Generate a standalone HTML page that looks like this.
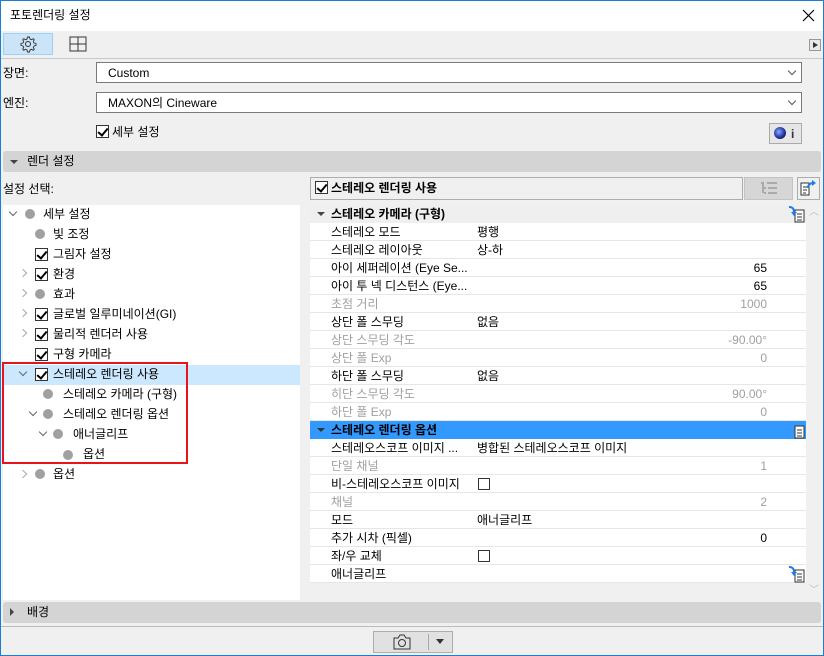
<!DOCTYPE html>
<html><head><meta charset="utf-8"><style>
*{margin:0;padding:0;box-sizing:border-box}
body{width:824px;height:656px;overflow:hidden;background:#f0f0f0;font-family:"Liberation Sans","Noto Sans CJK KR",sans-serif;font-size:12px;color:#000;position:relative}
.a{position:absolute}
.t{position:absolute;white-space:nowrap;line-height:14px}
.cb{position:absolute;width:13px;height:13px;border:1px solid #333;background:#fff}
.cb.c::after{content:"";position:absolute;left:3px;top:0px;width:4px;height:8px;border:solid #000;border-width:0 2px 2px 0;transform:rotate(40deg)}
.bul{position:absolute;width:10px;height:10px;border-radius:50%;background:#a0a0a0}
.chev{position:absolute;width:6px;height:6px;border:solid #666;border-width:0 1.5px 1.5px 0}
.dn{transform:rotate(45deg)}
.rt{transform:rotate(-45deg);border-color:#aaa}
.row{position:absolute;left:310px;width:496px;height:18px;background:#fff;border-bottom:1px solid #e6e6e6;line-height:14px}
.row .l{position:absolute;left:21px;top:2px}
.row .v{position:absolute;left:167px;top:2px}
.row .n{position:absolute;right:39px;top:2px}
.g{color:#a0a0a0}
.hd{position:absolute;left:310px;width:496px;height:18px;background:#efefef;font-weight:bold}
.dd{position:absolute;left:96px;width:706px;height:21px;background:#fff;border:1px solid #7a7a7a;line-height:14px}
.dd span{position:absolute;left:11px;top:3px}
.dd i{position:absolute;right:6px;top:5px;width:6px;height:6px;border:solid #555;border-width:0 1px 1px 0;transform:rotate(45deg)}
</style></head><body>
<div class="a" style="left:0;top:0;width:824px;height:656px;border:1px solid #1a7fd4;z-index:9;pointer-events:none"></div>
<div class="a" style="left:0;top:0;width:824px;height:31px;background:#fff"></div>
<div class="t" style="left:10px;top:8px">포토렌더링 설정</div>
<svg class="a" style="left:802px;top:9px" width="13" height="13"><path d="M1 1l11 11M12 1L1 12" stroke="#000" stroke-width="1.2"/></svg>
<div class="a" style="left:3px;top:33px;width:50px;height:22px;background:#cce4f7;border:1px solid #99d1ff"></div>
<svg class="a" style="left:19px;top:35px" width="18" height="18" viewBox="0 0 18 18"><circle cx="9" cy="9" r="2.5" fill="none" stroke="#333"/><path d="M9 2l1.5 0 .5 2 1.5 .7 1.8-1 1 1-1 1.8.7 1.5 2 .5v2l-2 .5-.7 1.5 1 1.8-1 1-1.8-1-1.5.7-.5 2h-2l-.5-2-1.5-.7-1.8 1-1-1 1-1.8-.7-1.5-2-.5v-2l2-.5.7-1.5-1-1.8 1-1 1.8 1 1.5-.7.5-2z" fill="none" stroke="#333" stroke-width=".9"/></svg>
<svg class="a" style="left:69px;top:36px" width="18" height="16"><rect x="1" y="1" width="16" height="14" fill="none" stroke="#333"/><path d="M9 1v14M1 8h16" stroke="#333"/></svg>
<div class="a" style="left:809px;top:39px;width:12px;height:12px;border:1px solid #999;background:#e8e8e8"></div>
<div class="a" style="left:813px;top:42px;border-left:5px solid #333;border-top:3px solid transparent;border-bottom:3px solid transparent"></div>
<div class="a" style="left:0;top:58px;width:824px;height:1px;background:#c8c8c8"></div>
<div class="t" style="left:3px;top:66px">장면:</div>
<div class="dd" style="top:62px"><span>Custom</span><i></i></div>
<div class="t" style="left:3px;top:96px">엔진:</div>
<div class="dd" style="top:92px"><span>MAXON의 Cineware</span><i></i></div>
<div class="cb c" style="left:96px;top:125px"></div>
<div class="t" style="left:112px;top:125px">세부 설정</div>
<div class="a" style="left:769px;top:123px;width:33px;height:21px;border:1px solid #aaa;background:#e6e6e6"></div>
<div class="a" style="left:774px;top:127px;width:12px;height:12px;border-radius:50%;background:radial-gradient(circle at 40% 40%,#88a8ff,#1a2a9a 60%,#111)"></div>
<div class="t" style="left:791px;top:127px;font-weight:bold;color:#333">i</div>
<div class="a" style="left:3px;top:151px;width:818px;height:21px;background:#d4d4d4;border-radius:3px"></div>
<div class="a" style="left:10px;top:160px;border-top:4px solid #444;border-left:4px solid transparent;border-right:4px solid transparent"></div>
<div class="t" style="left:27px;top:154px">렌더 설정</div>
<div class="t" style="left:3px;top:182px">설정 선택:</div>
<div class="a" style="left:3px;top:205px;width:297px;height:395px;background:#fff"></div>
<div class="a" style="left:3px;top:365px;width:297px;height:20px;background:#cce8ff"></div>
<div class="chev dn" style="left:10px;top:209px"></div><div class="bul" style="left:25px;top:209px"></div><div class="t" style="left:43px;top:207px">세부 설정</div>
<div class="bul" style="left:35px;top:229px"></div><div class="t" style="left:53px;top:227px">빛 조정</div>
<div class="cb c" style="left:35px;top:248px"></div><div class="t" style="left:53px;top:247px">그림자 설정</div>
<div class="chev rt" style="left:20px;top:270px"></div><div class="cb c" style="left:35px;top:268px"></div><div class="t" style="left:53px;top:267px">환경</div>
<div class="chev rt" style="left:20px;top:290px"></div><div class="bul" style="left:35px;top:289px"></div><div class="t" style="left:53px;top:287px">효과</div>
<div class="chev rt" style="left:20px;top:310px"></div><div class="cb c" style="left:35px;top:308px"></div><div class="t" style="left:53px;top:307px">글로벌 일루미네이션(GI)</div>
<div class="chev rt" style="left:20px;top:330px"></div><div class="cb c" style="left:35px;top:328px"></div><div class="t" style="left:53px;top:327px">물리적 렌더러 사용</div>
<div class="cb c" style="left:35px;top:348px"></div><div class="t" style="left:53px;top:347px">구형 카메라</div>
<div class="chev dn" style="left:20px;top:369px"></div><div class="cb c" style="left:35px;top:368px"></div><div class="t" style="left:53px;top:367px">스테레오 렌더링 사용</div>
<div class="bul" style="left:43px;top:389px"></div><div class="t" style="left:63px;top:387px">스테레오 카메라 (구형)</div>
<div class="chev dn" style="left:30px;top:409px"></div><div class="bul" style="left:43px;top:409px"></div><div class="t" style="left:63px;top:407px">스테레오 렌더링 옵션</div>
<div class="chev dn" style="left:40px;top:429px"></div><div class="bul" style="left:53px;top:429px"></div><div class="t" style="left:73px;top:427px">애너글리프</div>
<div class="bul" style="left:63px;top:450px"></div><div class="t" style="left:83px;top:447px">옵션</div>
<div class="chev rt" style="left:20px;top:471px"></div><div class="bul" style="left:35px;top:469px"></div><div class="t" style="left:53px;top:467px">옵션</div>
<div class="a" style="left:2px;top:362px;width:186px;height:102px;border:2px solid #e8141a"></div>
<div class="a" style="left:310px;top:177px;width:433px;height:23px;border:1px solid #adadad;background:#f0f0f0"></div>
<div class="cb c" style="left:315px;top:181px"></div>
<div class="t" style="left:331px;top:181px;font-weight:bold">스테레오 렌더링 사용</div>
<div class="a" style="left:744px;top:177px;width:49px;height:23px;background:#d6d6d6;border:1px solid #c4c4c4"></div>
<svg class="a" style="left:760px;top:181px" width="18" height="14"><path d="M1 2h3M7 2h10M4 7h2M8 7h9M4 12h2M8 12h9M3 3v9" stroke="#aaa" stroke-width="2"/></svg>
<div class="a" style="left:797px;top:177px;width:23px;height:23px;border:1px solid #adadad;background:#f0f0f0"></div>
<svg class="a" style="left:799px;top:179px" width="18" height="18"><path d="M2 4h8v12H2z" fill="#fff" stroke="#333"/><path d="M4 8h4M4 11h4M4 14h3" stroke="#333"/><path d="M9 9c0-4 3-5 6-5" fill="none" stroke="#1e7ce8" stroke-width="2"/><path d="M13 1l4 3-4 3z" fill="#1e7ce8"/></svg>
<div class="a" style="left:306px;top:205px;width:15px;height:395px;background:#f0f0f0"></div>
<div class="t" style="left:809px;top:206px;color:#bbb;font-size:10px">︿</div>
<div class="t" style="left:809px;top:584px;color:#bbb;font-size:10px">﹀</div>
<div class="hd" style="top:205px"><div class="a" style="left:7px;top:7px;border-top:4px solid #444;border-left:4px solid transparent;border-right:4px solid transparent"></div><div class="t" style="left:21px;top:2px">스테레오 카메라 (구형)</div></div>
<div class="row" style="top:223px"><span class="l">스테레오 모드</span><span class="v">평행</span></div>
<div class="row" style="top:241px"><span class="l">스테레오 레이아웃</span><span class="v">상-하</span></div>
<div class="row" style="top:259px"><span class="l">아이 세퍼레이션 (Eye Se...</span><span class="n">65</span></div>
<div class="row" style="top:277px"><span class="l">아이 투 넥 디스턴스 (Eye...</span><span class="n">65</span></div>
<div class="row g" style="top:295px"><span class="l">초점 거리</span><span class="n">1000</span></div>
<div class="row" style="top:313px"><span class="l">상단 폴 스무딩</span><span class="v">없음</span></div>
<div class="row g" style="top:331px"><span class="l">상단 스무딩 각도</span><span class="n">-90.00°</span></div>
<div class="row g" style="top:349px"><span class="l">상단 폴 Exp</span><span class="n">0</span></div>
<div class="row" style="top:367px"><span class="l">하단 폴 스무딩</span><span class="v">없음</span></div>
<div class="row g" style="top:385px"><span class="l">히단 스무딩 각도</span><span class="n">90.00°</span></div>
<div class="row g" style="top:403px"><span class="l">하단 폴 Exp</span><span class="n">0</span></div>
<div class="hd" style="top:421px;background:#3399ff;color:#000"><div class="a" style="left:7px;top:7px;border-top:4px solid #333;border-left:4px solid transparent;border-right:4px solid transparent"></div><div class="t" style="left:21px;top:2px">스테레오 렌더링 옵션</div></div>
<div class="row" style="top:439px"><span class="l">스테레오스코프 이미지 ...</span><span class="v">병합된 스테레오스코프 이미지</span></div>
<div class="row g" style="top:457px"><span class="l">단일 채널</span><span class="n">1</span></div>
<div class="row" style="top:475px"><span class="l">비-스테레오스코프 이미지</span><div class="cb" style="left:168px;top:3px;width:12px;height:12px"></div></div>
<div class="row g" style="top:493px"><span class="l">채널</span><span class="n">2</span></div>
<div class="row" style="top:511px"><span class="l">모드</span><span class="v">애너글리프</span></div>
<div class="row" style="top:529px"><span class="l">추가 시차 (픽셀)</span><span class="n">0</span></div>
<div class="row" style="top:547px"><span class="l">좌/우 교체</span><div class="cb" style="left:168px;top:3px;width:12px;height:12px"></div></div>
<div class="row" style="top:565px"><span class="l">애너글리프</span></div>
<svg class="a" style="left:788px;top:205px" width="18" height="18"><path d="M7 5h9v12H7z" fill="#fff" stroke="#333"/><path d="M9 9h5M9 12h5M9 15h5" stroke="#333"/><path d="M1 2c4 0 5 2 5 6" fill="none" stroke="#1e7ce8" stroke-width="2"/><path d="M3 7h6l-3 4z" fill="#1e7ce8"/></svg>
<svg class="a" style="left:788px;top:421px" width="18" height="18"><path d="M7 5h9v12H7z" fill="#fff" stroke="#333"/><path d="M9 9h5M9 12h5M9 15h5" stroke="#333"/></svg>
<svg class="a" style="left:788px;top:565px" width="18" height="18"><path d="M7 5h9v12H7z" fill="#fff" stroke="#333"/><path d="M9 9h5M9 12h5M9 15h5" stroke="#333"/><path d="M1 2c4 0 5 2 5 6" fill="none" stroke="#1e7ce8" stroke-width="2"/><path d="M3 7h6l-3 4z" fill="#1e7ce8"/></svg>
<div class="a" style="left:3px;top:602px;width:818px;height:21px;background:#d4d4d4;border-radius:3px"></div>
<div class="a" style="left:10px;top:608px;border-left:4px solid #444;border-top:4px solid transparent;border-bottom:4px solid transparent"></div>
<div class="t" style="left:27px;top:605px">배경</div>
<div class="a" style="left:0;top:626px;width:824px;height:1px;background:#bbb"></div>
<div class="a" style="left:373px;top:631px;width:80px;height:22px;border:1px solid #adadad;background:#e1e1e1"></div>
<div class="a" style="left:428px;top:634px;width:1px;height:16px;background:#aaa"></div>
<svg class="a" style="left:392px;top:633px" width="20" height="18"><path d="M2 5h4l2-3h4l2 3h4v11H2z" fill="none" stroke="#333"/><circle cx="10" cy="10" r="3.5" fill="none" stroke="#333"/></svg>
<div class="a" style="left:436px;top:639px;border-top:5px solid #333;border-left:4px solid transparent;border-right:4px solid transparent"></div>
</body></html>
